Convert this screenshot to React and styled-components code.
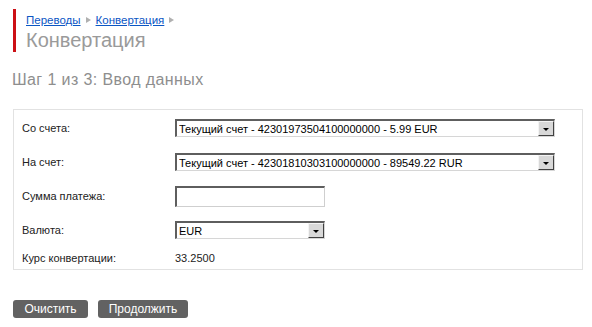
import React from "react";
import styled, { createGlobalStyle } from "styled-components";

const Global = createGlobalStyle`
  html, body { margin: 0; padding: 0; background: #fff; }
  body { font-family: "Liberation Sans", Arial, sans-serif; font-size: 11px; color: #222; }
`;

const Page = styled.div`
  padding: 9px 10px 0 10px;
`;

const Header = styled.div`
  margin-left: 3px;
  border-left: 3px solid #cc1016;
  padding-left: 10px;
  height: 43px;
  display: flex;
  flex-direction: column;
`;

const Crumbs = styled.div`
  display: flex;
  align-items: center;
  gap: 5px;
  height: 19px;
  padding-top: 1px;
  font-size: 11.5px;
`;

const CrumbLink = styled.a`
  color: #0b56c4;
  text-decoration: underline;
`;

const Arrow = styled.span`
  display: inline-block;
  width: 0;
  height: 0;
  border-top: 3px solid transparent;
  border-bottom: 3px solid transparent;
  border-left: 5px solid #b0b0b0;
`;

const Title = styled.h1`
  margin: 0;
  font-weight: normal;
  font-size: 20px;
  line-height: 23px;
  color: #9a9a9a;
`;

const StepTitle = styled.h2`
  margin: 19px 0 0 2px;
  font-weight: normal;
  font-size: 16px;
  letter-spacing: 0.4px;
  line-height: 18px;
  color: #8e8e8e;
`;

const Panel = styled.div`
  margin: 20px 0 0 3px;
  width: 568px;
  border: 1px solid #e2e2e2;
  padding-top: 1px;
  display: grid;
  grid-template-columns: 161px 1fr;
`;

const Row = styled.div`
  display: contents;
`;

const Label = styled.div`
  height: ${(p) => p.$h}px;
  display: flex;
  align-items: center;
  padding-left: 8px;
  color: #222;
`;

const Cell = styled.div`
  height: ${(p) => p.$h}px;
  display: flex;
  align-items: center;
`;

const SelectBox = styled.div`
  position: relative;
  box-sizing: border-box;
  width: ${(p) => p.$w}px;
  height: ${(p) => p.$hh}px;
  border-top: 2px solid #5e5e5e;
  border-left: 2px solid #5e5e5e;
  border-right: 1px solid #d6d6d6;
  border-bottom: 1px solid #d6d6d6;
  background: #fff;
`;

const NativeSelect = styled.select`
  appearance: none;
  -webkit-appearance: none;
  border: none;
  outline: none;
  background: transparent;
  width: 100%;
  height: 100%;
  margin: 0;
  padding: 0 20px 0 2px;
  font-family: "Liberation Sans", Arial, sans-serif;
  font-size: 11px;
  color: #000;
`;

const DropButton = styled.span`
  position: absolute;
  top: 0;
  right: 0;
  bottom: 0;
  width: 16px;
  box-sizing: border-box;
  background: #d8d8d8;
  border-top: 1px solid #f4f4f4;
  border-left: 1px solid #f4f4f4;
  border-right: 1px solid #404040;
  border-bottom: 1px solid #404040;
  display: flex;
  align-items: center;
  justify-content: center;
  pointer-events: none;
  &::after {
    content: "";
    display: block;
    width: 0;
    height: 0;
    margin-top: 1px;
    border-left: 3px solid transparent;
    border-right: 3px solid transparent;
    border-top: 3px solid #000;
  }
`;

const TextInput = styled.input`
  box-sizing: border-box;
  width: 150px;
  height: 21px;
  margin: 0;
  padding: 0 2px;
  border-top: 2px solid #5e5e5e;
  border-left: 2px solid #5e5e5e;
  border-right: 1px solid #cfcfcf;
  border-bottom: 1px solid #cfcfcf;
  outline: none;
  font-family: "Liberation Sans", Arial, sans-serif;
  font-size: 11px;
`;

const Value = styled.span`
  color: #222;
`;

const Buttons = styled.div`
  margin: 30px 0 0 3px;
  display: flex;
  gap: 10px;
`;

const Button = styled.button`
  width: ${(p) => p.$w}px;
  height: 18px;
  padding: 0;
  border: none;
  border-radius: 3px;
  background: #626262;
  color: #fff;
  font-family: "Liberation Sans", Arial, sans-serif;
  font-size: 12px;
  line-height: 18px;
  cursor: pointer;
`;

function Select({ width, height = 18, value }) {
  return (
    <SelectBox $w={width} $hh={height}>
      <NativeSelect defaultValue={value}>
        <option value={value}>{value}</option>
      </NativeSelect>
      <DropButton />
    </SelectBox>
  );
}

export default function App() {
  return (
    <Page>
      <Global />
      <Header>
        <Crumbs>
          <CrumbLink href="#">Переводы</CrumbLink>
          <Arrow />
          <CrumbLink href="#">Конвертация</CrumbLink>
          <Arrow />
        </Crumbs>
        <Title>Конвертация</Title>
      </Header>
      <StepTitle>Шаг 1 из 3: Ввод данных</StepTitle>
      <Panel>
        <Row>
          <Label $h={34}>Со счета:</Label>
          <Cell $h={34}>
            <Select width={380} value="Текущий счет - 42301973504100000000 - 5.99 EUR" />
          </Cell>
        </Row>
        <Row>
          <Label $h={34}>На счет:</Label>
          <Cell $h={34}>
            <Select width={380} value="Текущий счет - 42301810303100000000 - 89549.22 RUR" />
          </Cell>
        </Row>
        <Row>
          <Label $h={34}>Сумма платежа:</Label>
          <Cell $h={34}>
            <TextInput type="text" />
          </Cell>
        </Row>
        <Row>
          <Label $h={34}>Валюта:</Label>
          <Cell $h={34}>
            <Select width={150} value="EUR" />
          </Cell>
        </Row>
        <Row>
          <Label $h={22}>Курс конвертации:</Label>
          <Cell $h={22}>
            <Value>33.2500</Value>
          </Cell>
        </Row>
      </Panel>
      <Buttons>
        <Button $w={75}>Очистить</Button>
        <Button $w={90}>Продолжить</Button>
      </Buttons>
    </Page>
  );
}
